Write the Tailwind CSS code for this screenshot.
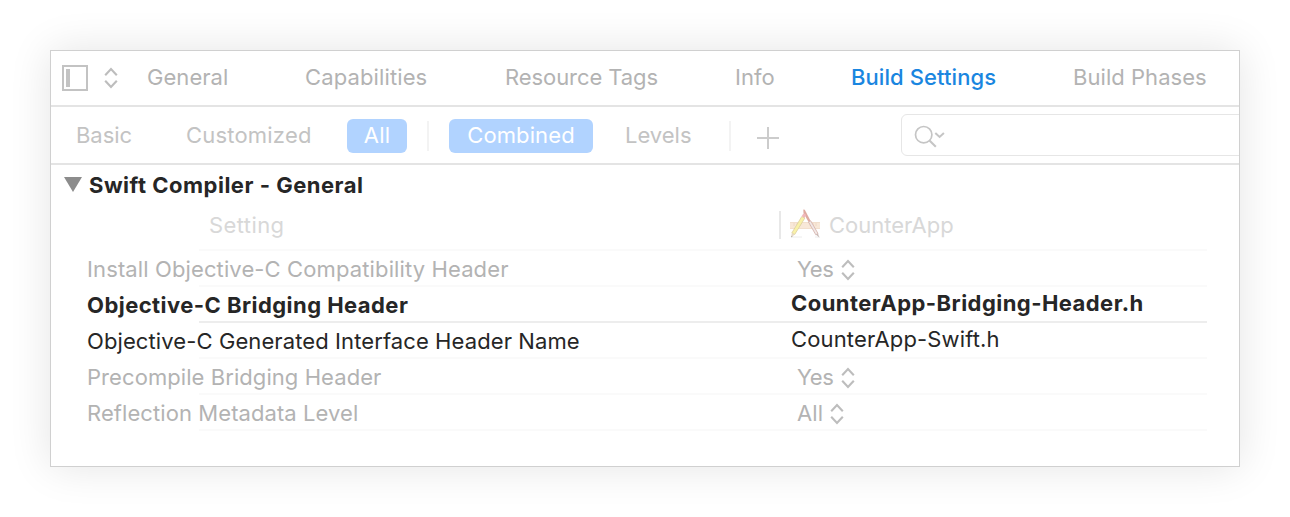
<!DOCTYPE html>
<html lang="en">
<head>
<meta charset="utf-8">
<title>Build Settings</title>
<script src="https://cdn.jsdelivr.net/npm/@tailwindcss/browser@4"></script>
</head>
<body class="bg-white">
<svg class="hidden">
  <symbol id="updown" viewBox="0 0 14 22"><path d="M1.2 8.2 7 2l5.8 6.2M1.2 13.8 7 20l5.8-6.2" fill="none" stroke="currentColor" stroke-width="2.1"/></symbol>
</svg>
<div class="p-[50px] w-[1290px] h-[517px] overflow-hidden font-['Inter','Liberation_Sans',sans-serif] text-[22px] leading-[34px] tracking-[0.12px] whitespace-nowrap text-[#b3b3b3]">
  <main class="w-[1190px] h-[417px] bg-white border border-[#d0d0d0] overflow-hidden shadow-[0_0_40px_rgba(0,0,0,0.11)]">

    <nav class="flex h-[56px] border-b-2 border-[#e4e4e4] pt-[9px]">
      <svg class="ml-[11px] mt-[5px] w-[26px] h-[26px] shrink-0 text-[#c3c3c3]" viewBox="0 0 26 26"><path d="M1 1h24v24H1z" fill="none" stroke="currentColor" stroke-width="2"/><path d="M4 4h4v18H4z" fill="currentColor"/></svg>
      <svg class="ml-4 mt-[7px] w-[14px] h-[22px] shrink-0 text-[#bdbdbd]"><use href="#updown"/></svg>
      <a class="ml-[29px] w-[158px] tracking-[0.05px]">General</a>
      <a class="w-[200px]">Capabilities</a>
      <a class="w-[230px] tracking-[-0.08px]">Resource Tags</a>
      <a class="w-[116px] tracking-normal">Info</a>
      <a class="w-[222px] font-medium tracking-[0.08px] text-[#1a86e0]">Build Settings</a>
      <a class="tracking-[0.05px]">Build Phases</a>
    </nav>

    <div class="flex h-[58px] border-b-2 border-[#e4e4e4] pt-3 text-[#c3c3c3] *:shrink-0">
      <span class="-mt-px ml-[25px] w-[110px] tracking-[-0.05px]">Basic</span>
      <span class="-mt-px w-[161px] tracking-[0.2px]">Customized</span>
      <span class="w-[60px] h-[34px] rounded-md bg-[#b1d3ff] text-white text-center leading-[32px] tracking-[0.25px]">All</span>
      <span class="ml-5 mt-[2px] w-[2px] h-[30px] bg-[#f3f3f3]"></span>
      <span class="ml-5 w-[144px] h-[34px] rounded-md bg-[#b1d3ff] text-white text-center leading-[32px] tracking-[0.1px]">Combined</span>
      <span class="-mt-px ml-8 w-[104px] tracking-normal">Levels</span>
      <span class="mt-[2px] w-[2px] h-[30px] bg-[#f3f3f3]"></span>
      <svg class="ml-[26px] mt-2 w-[22px] h-[22px]" viewBox="0 0 22 22"><path d="M0 11h22M11 0v22" stroke="#cccccc" stroke-width="2"/></svg>
      <div class="-mt-[5px] ml-[122px] w-[350px] h-[42px] border border-[#e6e6e6] rounded-md">
        <svg class="ml-3 mt-[10px] w-[32px] h-[24px]" viewBox="0 0 32 24" fill="none" stroke="#c5c5c5"><circle cx="9.7" cy="9.7" r="8.2" stroke-width="1.7"/><path d="m15.5 15.5 6.3 6.3" stroke-width="2.1"/><path d="m21.3 8 4.3 4 4.3-4" stroke-width="2"/></svg>
      </div>
    </div>

    <h2 class="flex h-[40px] pt-[3px] font-bold text-[#262626] tracking-[0.5px]">
      <svg class="ml-[13px] mt-[9px] mr-[7px] w-[18px] h-[15px]" viewBox="0 0 18 15"><path d="M0 0h18L9 15z" fill="#8c8c8c"/></svg>Swift Compiler - General
    </h2>

    <div class="flex h-[46px] pt-[3px] relative text-[#d8d8d8] after:absolute after:bottom-0 after:left-[148px] after:w-[1008px] after:h-[2px] after:bg-[#fafafa]">
      <span class="ml-[158px] w-[570px] tracking-[0.4px]">Setting</span>
      <span class="mt-[3px] w-[2px] h-[28px] bg-[#e8e8e8]"></span>
      <svg class="ml-[8px] -mt-px w-[32px] h-[32px] mr-[8px]" viewBox="0 0 32 32">
        <path d="M1 15h30v7H1z" fill="#f8e8d8"/><path d="M1 15.5h30M1 21.500h30" stroke="#f2dfcd"/>
        <path d="M5 16v3m3-3v2m3-2v3m10-3v3m3-3v2m3-2v3" stroke="#ecd6c3" stroke-width=".8"/>
        <path d="M3 30h10m13 0h5" stroke="#ececec"/>
        <path d="M14.300 2.500l1.500.2 5.700 11-2 1.300-5-9z" fill="#dfaaa0"/>
        <path d="m19.500 15 2.200-1.200 7.300 12.700-2.200 1.300z" fill="#f1e8e6" stroke="#d3aea8" stroke-width=".8"/>
        <path d="m27 27.800 2-1.400 1.300 4z" fill="#c9bab6"/>
        <path d="m12.800 9.500 3 1.600L5.700 27.500 2.800 26z" fill="#f9f1a8" stroke="#dccf9d" stroke-width=".8"/>
        <path d="m12.700 9.300 1.300-2.400c.7-.9 3.200.4 2.800 1.600l-1.200 2.400z" fill="#f1b8bb"/>
        <path d="m2.800 26-.6 4.500 3.500-3z" fill="#e6d9c6"/><path d="m2.400 28.800-.2 1.800 1.400-1.200z" fill="#a8a39c"/>
      </svg>
      <span class="tracking-normal">CounterApp</span>
    </div>

    <section>
      <div class="flex h-[36px] pt-[1px] relative after:absolute after:bottom-0 after:left-[148px] after:w-[1008px] after:h-[2px] after:bg-[#fafafa]">
        <span class="ml-[36px] w-[710px]">Install Objective-C Compatibility Header</span>
        <span class="w-[44px] tracking-[-0.4px]">Yes</span>
        <svg class="mt-[7px] w-[14px] h-[22px] text-[#bdbdbd]"><use href="#updown"/></svg>
      </div>
      <div class="flex h-[36px] pt-[1px] relative font-bold text-[#262626] after:absolute after:bottom-0 after:left-[148px] after:w-[1008px] after:h-[2px] after:bg-[#ededed]">
        <span class="ml-[36px] w-[704px] tracking-[0.45px]">Objective-C Bridging Header</span>
        <span class="-mt-[2px] tracking-[0.45px]">CounterApp-Bridging-Header.h</span>
      </div>
      <div class="flex h-[36px] pt-[1px] relative text-[#262626] after:absolute after:bottom-0 after:left-[148px] after:w-[1008px] after:h-[2px] after:bg-[#fafafa]">
        <span class="ml-[36px] w-[704px] tracking-[0.1px]">Objective-C Generated Interface Header Name</span>
        <span class="-mt-[2px] tracking-[0.14px]">CounterApp-Swift.h</span>
      </div>
      <div class="flex h-[36px] pt-[1px] relative after:absolute after:bottom-0 after:left-[148px] after:w-[1008px] after:h-[2px] after:bg-[#fafafa]">
        <span class="ml-[36px] w-[710px] tracking-[0.07px]">Precompile Bridging Header</span>
        <span class="w-[44px] tracking-[-0.4px]">Yes</span>
        <svg class="mt-[7px] w-[14px] h-[22px] text-[#bdbdbd]"><use href="#updown"/></svg>
      </div>
      <div class="flex h-[36px] pt-[1px] relative after:absolute after:bottom-0 after:left-[148px] after:w-[1008px] after:h-[2px] after:bg-[#fafafa]">
        <span class="ml-[36px] w-[710px] tracking-[0.08px]">Reflection Metadata Level</span>
        <span class="w-[33px] tracking-[0.1px]">All</span>
        <svg class="mt-[7px] w-[14px] h-[22px] text-[#bdbdbd]"><use href="#updown"/></svg>
      </div>
    </section>
  </main>
</div>
</body>
</html>
